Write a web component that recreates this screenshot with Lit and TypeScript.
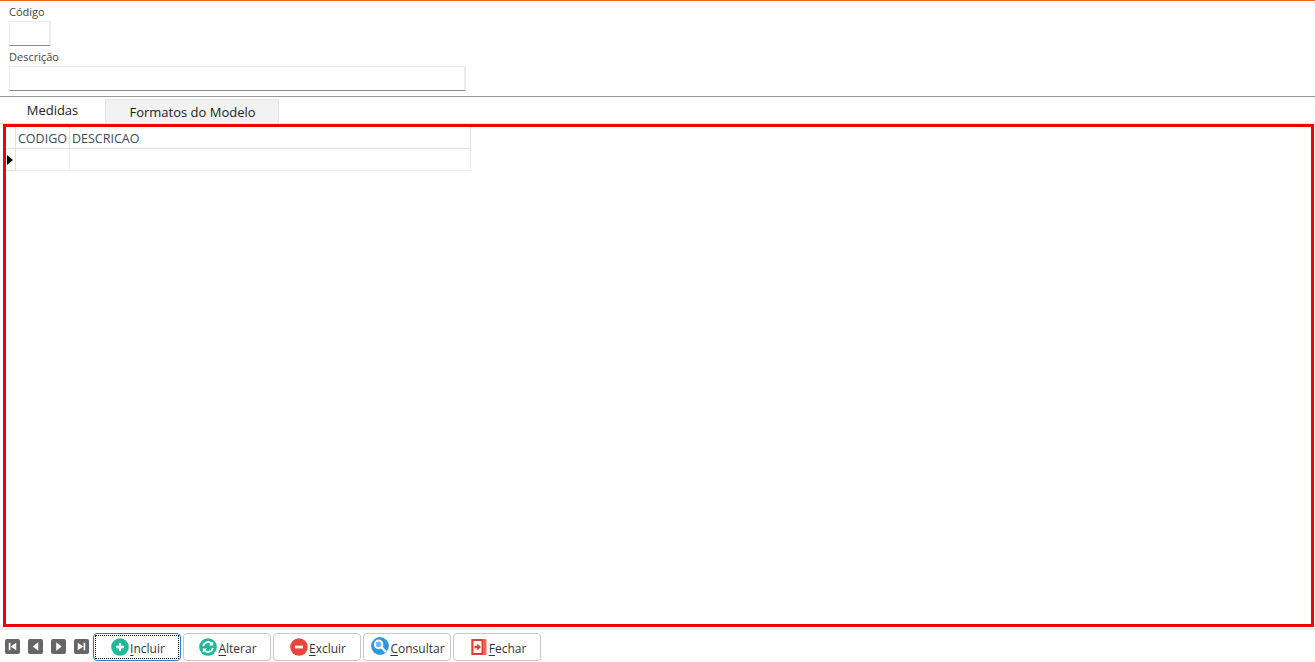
import { LitElement, html, css, svg } from "lit";
import { customElement } from "lit/decorators.js";

const navIcons = [
  svg`<path d="M4 4h1.800v8H4zM12 4v8L6 8z" fill="#fff"/>`,
  svg`<path d="M11 3.500v9L5 8z" fill="#fff"/>`,
  svg`<path d="M5.500 3.500v9l6-4.500z" fill="#fff"/>`,
  svg`<path d="M10.200 4H12v8h-1.800zM4 4v8l6-4z" fill="#fff"/>`,
];

const plus = svg`<circle cx="9" cy="9" r="8.800" fill="#1fb89a"/><path d="M9 5v8M5 9h8" stroke="#fff" stroke-width="2.400"/>`;
const sync = svg`<circle cx="9" cy="9" r="8.800" fill="#1fb89a"/>
  <path d="M4.200 8.200a4.900 4.900 0 0 1 8.300-2.700M13.800 9.800a4.900 4.900 0 0 1-8.300 2.700" fill="none" stroke="#fff" stroke-width="1.800"/>
  <path d="M14.200 3.400v4.200H10zM3.800 14.600v-4.200H8z" fill="#fff"/>`;
const minus = svg`<circle cx="9" cy="9" r="8.800" fill="#e8453c"/><path d="M5 9h8" stroke="#fff" stroke-width="2.800"/>`;
const search = svg`<circle cx="9" cy="9" r="8.900" fill="#2f96dc"/><circle cx="7.600" cy="7.400" r="3.800" fill="#6cb9ec" stroke="#fff" stroke-width="2"/><path d="M10.400 10.200l4.600 4.600" stroke="#fff" stroke-width="2.400"/>`;
const door = svg`<rect x="1.500" y="1" width="15" height="16" rx="1" fill="#f0625a"/><rect x="1.500" y="1" width="11.500" height="16" fill="#e8392f"/><rect x="3.500" y="3" width="8" height="12" fill="#fff"/><path d="M4.500 7.800h2.700V5.400L11 9l-3.800 3.600v-2.400H4.500z" fill="#e8392f"/>`;

const buttons = [
  { key: "I", rest: "ncluir", icon: plus, focus: true },
  { key: "A", rest: "lterar", icon: sync },
  { key: "E", rest: "xcluir", icon: minus },
  { key: "C", rest: "onsultar", icon: search, raised: true },
  { key: "F", rest: "echar", icon: door },
];

@customElement("app-root")
export class AppRoot extends LitElement {
  static styles = css`
    :host {
      display: flex;
      flex-direction: column;
      width: 1315px;
      height: 662px;
      background: #fff;
      overflow: hidden;
      font-family: "Open Sans", "Noto Sans", sans-serif;
      color: #333;
      box-sizing: border-box;
      border-top: 1px solid #f4610f;
    }
    .form {
      height: 96px;
      flex: none;
      padding-left: 9px;
      box-sizing: border-box;
      border-bottom: 1px solid #999;
    }
    .lbl {
      display: block;
      font-size: 11px;
      line-height: 14px;
      height: 14px;
      color: #444;
    }
    .first { margin-top: 4px; }
    .second { margin-top: 4px; }
    .input {
      box-sizing: border-box;
      height: 25px;
      margin-top: 2px;
      background: #fff;
      border: 1px solid #ececec;
      border-bottom: 1px solid #8a8a8a;
      border-right: 2px solid #ececec;
      border-radius: 1px;
    }
    .code { width: 42px; }
    .desc { width: 457px; }
    .tabs {
      display: flex;
      align-items: flex-end;
      height: 27px;
      box-sizing: border-box;
      flex: none;
      border-bottom: 1px solid #e8e8e8;
    }
    .tab {
      box-sizing: border-box;
      font-size: 13px;
      color: #222;
      display: flex;
      align-items: center;
      justify-content: center;
    }
    .tab.on { width: 105px; height: 26px; }
    .tab.off {
      width: 174px;
      height: 24px;
      background: #f2f2f2;
      border: 1px solid #e6e6e6;
      border-bottom: none;
      padding-left: 1px;
    }
    .panel {
      flex: none;
      margin-left: 3px;
      width: 1311px;
      height: 503px;
      box-sizing: border-box;
      border: 3px solid #f00000;
      background: #fff;
    }
    .grid {
      display: grid;
      grid-template-columns: 10px 54px 401px;
      grid-template-rows: 22px 22px;
      width: 465px;
      font-size: 12.5px;
      color: #3c4a5a;
    }
    .c {
      box-sizing: border-box;
      border-right: 1px solid #e2e2e2;
      border-bottom: 1px solid #e2e2e2;
      padding: 3px 0 0 2px;
      line-height: 18px;
      white-space: nowrap;
    }
    .c.r2 { border-color: #efefef; }
    .ind {
      padding: 0;
      display: flex;
      align-items: center;
      border-right-color: #e2e2e2;
    }
    .arrow {
      width: 0;
      height: 0;
      margin-left: 1px;
      border-left: 6px solid #000;
      border-top: 5.500px solid transparent;
      border-bottom: 5.500px solid transparent;
    }
    .bar {
      flex: 1;
      margin-top: 1px;
      border-top: 2px solid #ececec;
      display: flex;
      align-items: flex-start;
      padding: 3px 0 0 5px;
    }
    .navs { display: flex; gap: 8px; margin: 6px 4px 0 0; }
    .nav {
      width: 15px;
      height: 15px;
      background: #666;
      border-radius: 2px;
      display: block;
    }
    .btns { display: flex; gap: 2px; }
    .btn {
      box-sizing: border-box;
      width: 88px;
      height: 28px;
      border: 1px solid #c8c8c8;
      border-radius: 4px;
      background: #fff;
      display: flex;
      align-items: center;
      justify-content: center;
      gap: 1px;
      font-size: 12px;
      color: #333;
      position: relative;
      padding: 2px 0 0 2px;
    }
    .btn.focus { border-color: #1e7fd0; }
    .btn.focus::after {
      content: "";
      position: absolute;
      inset: 1px;
      border: 1px dotted #000;
    }
    .ico { width: 18px; height: 18px; flex: none; margin-top: -2px; }
    .ico.raised { margin-top: -5px; }
    u { text-underline-offset: 2px; }
  `;

  render() {
    return html`
      <div class="form">
        <span class="lbl first">Código</span>
        <div class="input code"></div>
        <span class="lbl second">Descrição</span>
        <div class="input desc"></div>
      </div>
      <div class="tabs">
        <div class="tab on">Medidas</div>
        <div class="tab off">Formatos do Modelo</div>
      </div>
      <div class="panel">
        <div class="grid">
          <div class="c"></div>
          <div class="c">CODIGO</div>
          <div class="c">DESCRICAO</div>
          <div class="c ind"><span class="arrow"></span></div>
          <div class="c r2"></div>
          <div class="c r2"></div>
        </div>
      </div>
      <div class="bar">
        <div class="navs">
          ${navIcons.map((p) => html`<svg class="nav" viewBox="0 0 16 16">${p}</svg>`)}
        </div>
        <div class="btns">
          ${buttons.map(
            (b) => html`<div class="btn ${b.focus ? "focus" : ""}">
              <svg class="ico ${b.raised ? "raised" : ""}" viewBox="0 0 18 18">${b.icon}</svg>
              <span><u>${b.key}</u>${b.rest}</span>
            </div>`
          )}
        </div>
      </div>
    `;
  }
}
